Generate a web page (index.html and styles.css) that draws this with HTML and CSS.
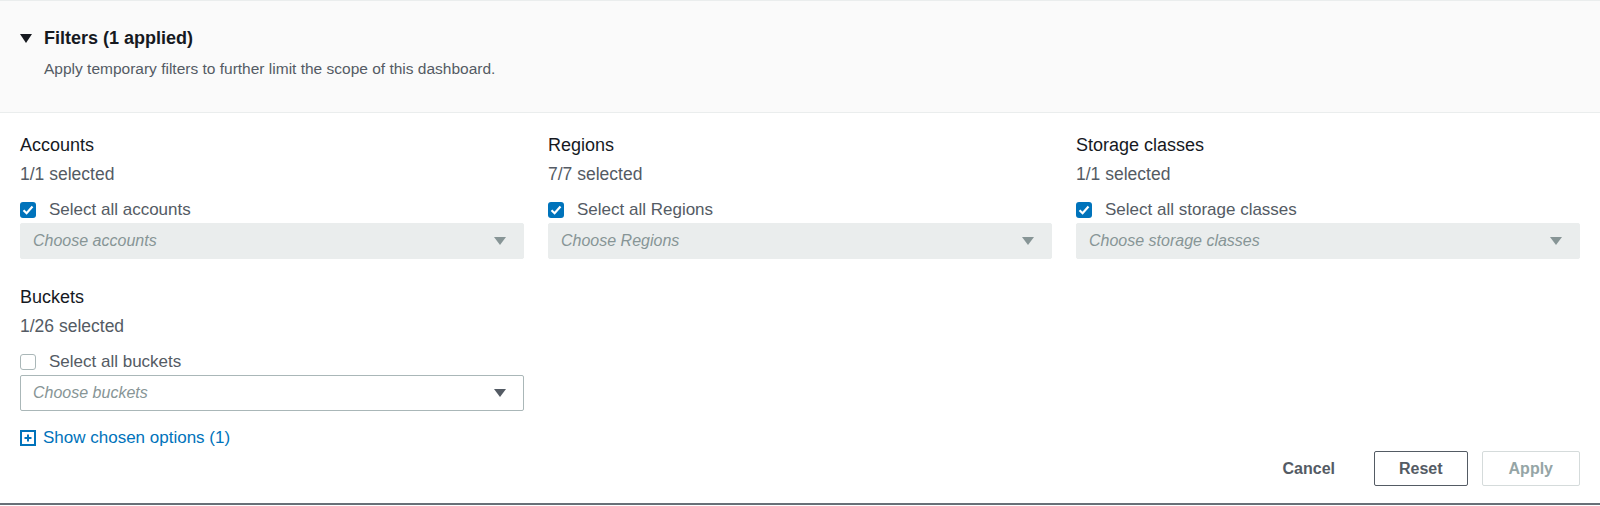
FILE: index.html
```html
<!DOCTYPE html>
<html lang="en">
<head>
    <meta charset="UTF-8">
    <meta name="viewport" content="width=device-width, initial-scale=1.0">
    <title>Filters</title>
    <link rel="stylesheet" href="styles.css">
</head>
<body>

    <div class="panel">
        <div class="panel-header">
            <div class="panel-title">
                <svg class="caret" width="12" height="9" viewBox="0 0 12 9"><path d="M0 0H12L6 9Z" fill="#16191f"/></svg>
                <span>Filters (1 applied)</span>
            </div>
            <p class="panel-desc">Apply temporary filters to further limit the scope of this dashboard.</p>
        </div>

        <div class="panel-body">
            <div class="filters-grid">
                <div class="filter">
                    <div class="filter-label">Accounts</div>
                    <div class="filter-count">1/1 selected</div>
                    <label class="check-row">
                        <span class="checkbox checked"><svg width="16" height="16" viewBox="0 0 16 16"><path d="M3.5 8.2L6.6 11.2L12.5 4.6" fill="none" stroke="#fff" stroke-width="2.2"/></svg></span>
                        Select all accounts
                    </label>
                    <div class="select disabled">
                        <span class="placeholder">Choose accounts</span>
                        <svg class="arrow" width="12" height="8" viewBox="0 0 12 8"><path d="M0 0H12L6 8Z"/></svg>
                    </div>
                </div>

                <div class="filter">
                    <div class="filter-label">Regions</div>
                    <div class="filter-count">7/7 selected</div>
                    <label class="check-row">
                        <span class="checkbox checked"><svg width="16" height="16" viewBox="0 0 16 16"><path d="M3.5 8.2L6.6 11.2L12.5 4.6" fill="none" stroke="#fff" stroke-width="2.2"/></svg></span>
                        Select all Regions
                    </label>
                    <div class="select disabled">
                        <span class="placeholder">Choose Regions</span>
                        <svg class="arrow" width="12" height="8" viewBox="0 0 12 8"><path d="M0 0H12L6 8Z"/></svg>
                    </div>
                </div>

                <div class="filter">
                    <div class="filter-label">Storage classes</div>
                    <div class="filter-count">1/1 selected</div>
                    <label class="check-row">
                        <span class="checkbox checked"><svg width="16" height="16" viewBox="0 0 16 16"><path d="M3.5 8.2L6.6 11.2L12.5 4.6" fill="none" stroke="#fff" stroke-width="2.2"/></svg></span>
                        Select all storage classes
                    </label>
                    <div class="select disabled">
                        <span class="placeholder">Choose storage classes</span>
                        <svg class="arrow" width="12" height="8" viewBox="0 0 12 8"><path d="M0 0H12L6 8Z"/></svg>
                    </div>
                </div>

                <div class="filter">
                    <div class="filter-label">Buckets</div>
                    <div class="filter-count">1/26 selected</div>
                    <label class="check-row">
                        <span class="checkbox"></span>
                        Select all buckets
                    </label>
                    <div class="select">
                        <span class="placeholder">Choose buckets</span>
                        <svg class="arrow" width="12" height="8" viewBox="0 0 12 8"><path d="M0 0H12L6 8Z"/></svg>
                    </div>
                </div>
            </div>

            <a class="show-chosen" href="#">
                <svg width="16" height="16" viewBox="0 0 16 16"><rect x="1" y="1" width="14" height="14" fill="none" stroke="#0073bb" stroke-width="2"/><path d="M8 4.5V11.5M4.5 8H11.5" stroke="#0073bb" stroke-width="2"/></svg>
                Show chosen options (1)
            </a>

            <div class="actions">
                <button class="btn btn-link">Cancel</button>
                <button class="btn btn-normal">Reset</button>
                <button class="btn btn-primary" disabled>Apply</button>
            </div>
        </div>
    </div>

</body>
</html>
```

FILE: styles.css
```css
body {
    font-family: "Liberation Sans", Arial, sans-serif;
    margin: 0;
    color: #16191f;
}

.panel {
    border-bottom: 2px solid #687078;
}

.panel-header {
    background-color: #fafafa;
    border-top: 1px solid #eaeded;
    border-bottom: 1px solid #eaeded;
    padding: 26px 20px 33px;
}

.panel-title {
    display: flex;
    align-items: center;
    gap: 12px;
    font-size: 18px;
    font-weight: bold;
    line-height: 22px;
}

.caret {
    flex: none;
}

.panel-desc {
    margin: 10px 0 0 24px;
    font-size: 15.5px;
    line-height: 20px;
    color: #545b64;
}

.panel-body {
    padding: 21px 20px 17px;
}

.filters-grid {
    display: grid;
    grid-template-columns: repeat(3, 1fr);
    column-gap: 24px;
    row-gap: 27px;
}

.filter-label {
    font-size: 18px;
    line-height: 22px;
}

.filter-count {
    margin-top: 7px;
    font-size: 17.5px;
    line-height: 22px;
    color: #545b64;
}

.check-row {
    display: flex;
    align-items: center;
    gap: 13px;
    margin-top: 14px;
    height: 22px;
    font-size: 17px;
    color: #545b64;
}

.checkbox {
    width: 16px;
    height: 16px;
    box-sizing: border-box;
    border: 1px solid #aab7b8;
    border-radius: 3px;
    background-color: #fff;
    flex: none;
}

.checkbox.checked {
    border: none;
    background-color: #0073bb;
}

.checkbox svg {
    display: block;
}

.select {
    display: flex;
    align-items: center;
    justify-content: space-between;
    margin-top: 2px;
    height: 36px;
    box-sizing: border-box;
    padding: 0 17px 0 12px;
    border: 1px solid #aab7b8;
    border-radius: 2px;
    background-color: #fff;
}

.select .arrow {
    fill: #545b64;
}

.select.disabled {
    background-color: #eaeded;
    border-color: #eaeded;
}

.select.disabled .arrow {
    fill: #879596;
}

.placeholder {
    font-size: 16px;
    font-style: italic;
    color: #879596;
}

.show-chosen {
    display: inline-flex;
    align-items: center;
    gap: 7px;
    margin-top: 16px;
    font-size: 17px;
    line-height: 22px;
    color: #0073bb;
    text-decoration: none;
}

.actions {
    display: flex;
    justify-content: flex-end;
    gap: 14px;
    margin-top: 1px;
}

.btn {
    height: 35px;
    padding: 0 24px;
    font-family: inherit;
    font-size: 16px;
    font-weight: bold;
    border-radius: 2px;
    background-color: #fff;
    color: #545b64;
    border: 1px solid transparent;
    cursor: pointer;
}

.btn-normal {
    border-color: #545b64;
    color: #545b64;
}

.btn-primary {
    padding: 0 26px;
    border-color: #d5dbdb;
    color: #95a5a6;
    cursor: default;
}
```
